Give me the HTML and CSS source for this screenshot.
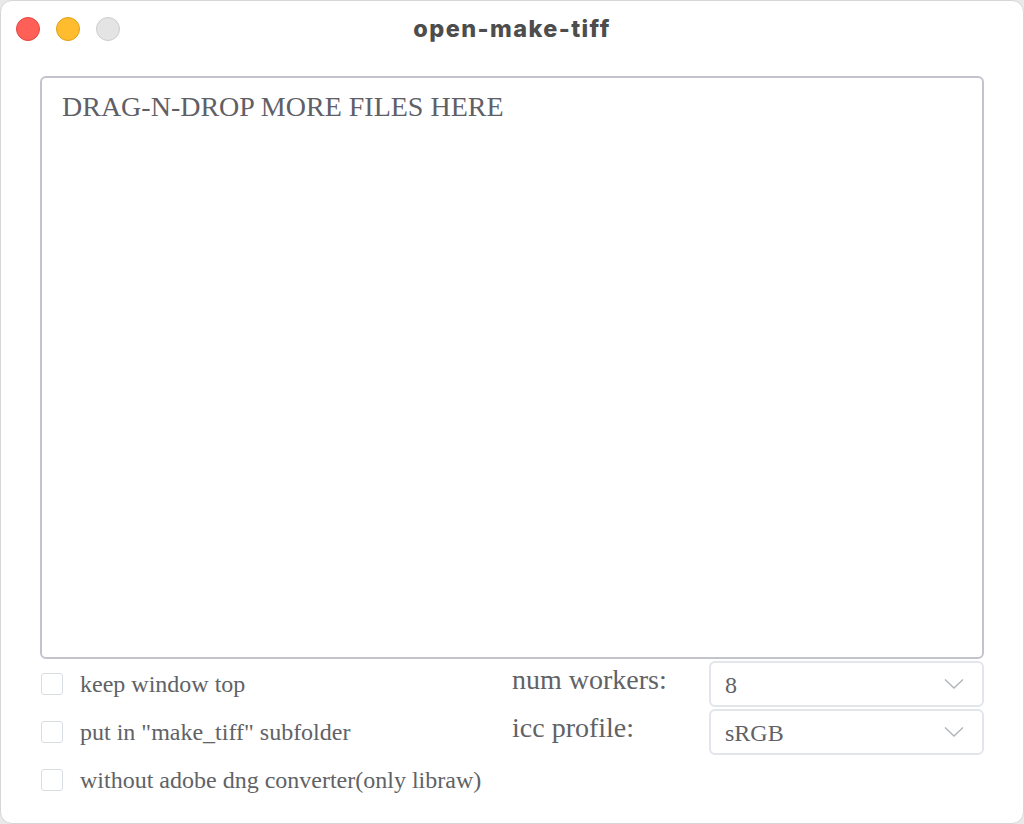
FILE: index.html
```html
<!DOCTYPE html>
<html>
<head>
<meta charset="utf-8">
<link rel="stylesheet" href="styles.css">
</head>
<body>
<div class="window">
  <div class="titlebar">
    <div class="lights">
      <span class="light red"></span>
      <span class="light yellow"></span>
      <span class="light grey"></span>
    </div>
    <div class="title">open-make-tiff</div>
  </div>
  <div class="content">
    <div class="dropzone">DRAG-N-DROP MORE FILES HERE</div>
    <div class="options">
      <div class="checks">
        <label class="check"><span class="box"></span><span class="lbl">keep window top</span></label>
        <label class="check"><span class="box"></span><span class="lbl">put in "make_tiff" subfolder</span></label>
        <label class="check"><span class="box"></span><span class="lbl">without adobe dng converter(only libraw)</span></label>
      </div>
      <div class="selects">
        <div class="field">
          <span class="flabel">num workers:</span>
          <div class="select"><span>8</span>
            <svg class="chev" width="20" height="12" viewBox="0 0 20 12"><path d="M1 1.5 L10 10 L19 1.5" fill="none" stroke="#b0b3b9" stroke-width="1.3"/></svg>
          </div>
        </div>
        <div class="field">
          <span class="flabel">icc profile:</span>
          <div class="select"><span>sRGB</span>
            <svg class="chev" width="20" height="12" viewBox="0 0 20 12"><path d="M1 1.5 L10 10 L19 1.5" fill="none" stroke="#b0b3b9" stroke-width="1.3"/></svg>
          </div>
        </div>
      </div>
    </div>
  </div>
</div>
</body>
</html>
```

FILE: styles.css
```css
html, body {
  margin: 0;
  padding: 0;
  width: 1024px;
  height: 824px;
  overflow: hidden;
  background: #e9e9e9;
}
.window {
  width: 1024px;
  height: 824px;
  box-sizing: border-box;
  background: #ffffff;
  border-radius: 12px;
  border: 1px solid #d6d6d6;
  display: flex;
  flex-direction: column;
  font-family: "Liberation Serif", "Times New Roman", Times, serif;
}
.titlebar {
  height: 55px;
  flex: none;
  display: flex;
  align-items: center;
  position: relative;
}
.lights {
  display: flex;
  gap: 16px;
  padding-left: 15px;
}
.light {
  width: 24px;
  height: 24px;
  border-radius: 50%;
  box-sizing: border-box;
}
.red { background: #fe5f57; border: 1px solid #e2463f; }
.yellow { background: #febc2e; border: 1px solid #e1a116; }
.grey { background: #e4e4e4; border: 1px solid #cdcdcd; }
.title {
  position: absolute;
  left: 0;
  right: 0;
  top: 13px;
  text-align: center;
  font-family: Inter, "Liberation Sans", Arial, sans-serif;
  font-weight: 800;
  font-size: 23.5px;
  letter-spacing: 1.4px;
  padding-left: 0;
  color: #4d4d4d;
}
.content {
  flex: 1;
  padding: 20px 39px 0 39px;
  display: flex;
  flex-direction: column;
}
.dropzone {
  height: 583px;
  box-sizing: border-box;
  border: 2px solid #c3c3cb;
  border-radius: 6px;
  padding: 14px 20px;
  font-size: 28px;
  color: #5f6066;
  line-height: 30px;
}
.options {
  display: flex;
  justify-content: space-between;
}
.checks {
  display: flex;
  flex-direction: column;
  padding-top: 14px;
  gap: 26px;
}
.check {
  display: flex;
  align-items: center;
  height: 22px;
  font-size: 24px;
  color: #606266;
}
.box {
  width: 22px;
  height: 22px;
  box-sizing: border-box;
  border: 1.5px solid #d9dde4;
  border-radius: 3px;
  margin-left: 1px;
  margin-right: 17px;
}
.selects {
  display: flex;
  flex-direction: column;
  padding-top: 2px;
  gap: 2px;
}
.field {
  display: flex;
  align-items: flex-start;
}
.flabel {
  width: 197px;
  font-size: 28px;
  color: #606266;
  line-height: 38px;
}
.select {
  width: 275px;
  height: 46px;
  box-sizing: border-box;
  border: 2px solid #e2e5ea;
  border-radius: 6px;
  display: flex;
  align-items: center;
  justify-content: space-between;
  padding: 2px 18px 0 14px;
  font-size: 24px;
  color: #606266;
}
.chev { margin-top: -2px; }
```
